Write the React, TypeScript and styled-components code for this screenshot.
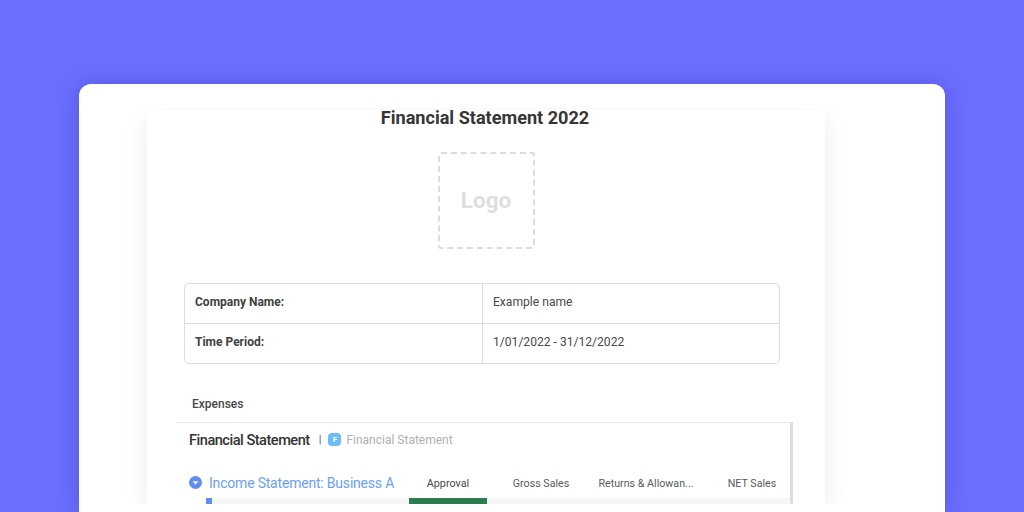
import styled, { createGlobalStyle } from 'styled-components';

const GlobalStyle = createGlobalStyle`
  html, body {
    margin: 0;
    padding: 0;
    width: 1024px;
    height: 512px;
    overflow: hidden;
  }
  body {
    font-family: Roboto, "Liberation Sans", sans-serif;
    background: #6b6eff;
  }
`;

const columns = [
  { label: 'Gross Sales', width: 108 },
  { label: 'Returns & Allowan...', width: 102 },
  { label: 'NET Sales', width: 110 },
];

const infoRows = [
  { label: 'Company Name:', value: 'Example name' },
  { label: 'Time Period:', value: '1/01/2022 - 31/12/2022' },
];

const App = () => (
  <Page>
    <GlobalStyle />
    <Card>
      <SheetClip>
        <Sheet>
          <Title>Financial Statement 2022</Title>
          <LogoBox>Logo</LogoBox>
          <InfoTable>
            {infoRows.map((row) => (
              <InfoRow key={row.label}>
                <InfoLabel>{row.label}</InfoLabel>
                <InfoValue>{row.value}</InfoValue>
              </InfoRow>
            ))}
          </InfoTable>
          <SectionLabel>Expenses</SectionLabel>
          <Board>
            <BoardHeader>
              <BoardTitle>Financial Statement</BoardTitle>
              <Divider>|</Divider>
              <FormBadge>F</FormBadge>
              <BoardSubtitle>Financial Statement</BoardSubtitle>
            </BoardHeader>
            <GroupRow>
              <GroupName>
                <svg width="13" height="13" viewBox="0 0 13 13" aria-hidden="true">
                  <circle cx="6.5" cy="6.5" r="6.5" fill="#5f8eee" />
                  <path d="M3.6 5.2h5.8L6.5 8.4z" fill="#fff" />
                </svg>
                <GroupTitle>Income Statement: Business A</GroupTitle>
              </GroupName>
              <ApprovalHead>Approval</ApprovalHead>
              {columns.map((col) => (
                <ColumnHead key={col.label} $width={col.width}>{col.label}</ColumnHead>
              ))}
            </GroupRow>
            <ProgressRow>
              <BlueMark />
              <GreenBar />
            </ProgressRow>
          </Board>
        </Sheet>
      </SheetClip>
    </Card>
  </Page>
);

const Page = styled.div`
  width: 1024px;
  height: 512px;
  padding-top: 84px;
  box-sizing: border-box;
  overflow: hidden;
`;

const Card = styled.div`
  width: 866px;
  height: 428px;
  margin-left: 79px;
  padding-top: 24px;
  box-sizing: border-box;
  background: #fff;
  border-radius: 12px 12px 0 0;
  box-shadow: 0 0 22px rgba(50, 50, 170, 0.38);
`;

const SheetClip = styled.div`
  width: 738px;
  height: 396px;
  margin-left: 34px;
  padding: 2px 26px 0 34px;
  box-sizing: border-box;
  overflow: hidden;
`;

const Sheet = styled.div`
  width: 678px;
  height: 394px;
  display: flex;
  flex-direction: column;
  align-items: flex-start;
  background: #fff;
  box-shadow: 0 8px 24px rgba(0, 0, 0, 0.08);
  & > * {
    flex-shrink: 0;
  }
`;

const Title = styled.div`
  align-self: center;
  margin: -2px 0 -2px -2px;
  line-height: 20px;
  font-size: 18.1px;
  font-weight: 700;
  color: #363636;
`;

const LogoBox = styled.div`
  align-self: center;
  width: 97px;
  height: 97px;
  margin-top: 26px;
  padding-bottom: 2px;
  display: flex;
  align-items: center;
  justify-content: center;
  box-sizing: border-box;
  border: 2px dashed #dcdcdc;
  border-radius: 3px;
  font-size: 22.5px;
  font-weight: 700;
  color: #dedede;
`;

const InfoTable = styled.div`
  width: 596px;
  margin: 34px 0 0 37px;
  box-sizing: border-box;
  border: 1px solid #dcdcdc;
  border-radius: 5px;
`;

const InfoRow = styled.div`
  display: flex;
  height: 39px;
  & + & {
    border-top: 1px solid #dcdcdc;
  }
`;

const InfoLabel = styled.div`
  width: 298px;
  padding-left: 10px;
  box-sizing: border-box;
  border-right: 1px solid #dcdcdc;
  line-height: 36px;
  font-size: 12px;
  font-weight: 700;
  color: #3f3f3f;
`;

const InfoValue = styled.div`
  padding-left: 10px;
  line-height: 36px;
  font-size: 12.1px;
  color: #484848;
`;

const SectionLabel = styled.div`
  margin: 33px 0 0 45px;
  height: 14px;
  line-height: 14px;
  font-size: 12px;
  font-weight: 500;
  color: #484848;
`;

const Board = styled.div`
  width: 615px;
  height: 82px;
  margin: 11px 0 0 31px;
  box-sizing: border-box;
  padding-left: 11px;
  border-top: 1px solid #e8e8e8;
  border-right: 3px solid #dedede;
  overflow: hidden;
`;

const BoardHeader = styled.div`
  display: flex;
  align-items: center;
  height: 33px;
`;

const BoardTitle = styled.span`
  font-size: 14.6px;
  font-weight: 500;
  letter-spacing: -0.5px;
  color: #333;
`;

const Divider = styled.span`
  margin-left: 9px;
  font-size: 11px;
  color: #555;
`;

const FormBadge = styled.span`
  width: 13px;
  height: 13px;
  margin-left: 7px;
  display: flex;
  align-items: center;
  justify-content: center;
  border-radius: 4px;
  background: #6cbcf5;
  font-size: 8px;
  font-weight: 700;
  color: #fff;
`;

const BoardSubtitle = styled.span`
  margin-left: 5px;
  font-size: 12px;
  color: #aeb0b4;
`;

const GroupRow = styled.div`
  display: flex;
  align-items: center;
  height: 21px;
  margin-top: 17px;
`;

const GroupName = styled.div`
  width: 220px;
  padding-bottom: 2px;
  box-sizing: border-box;
  flex-shrink: 0;
  display: flex;
  align-items: center;
  gap: 7px;
`;

const GroupTitle = styled.span`
  font-size: 14px;
  letter-spacing: -0.2px;
  white-space: nowrap;
  color: #6c9ef5;
`;

const ApprovalHead = styled.div`
  width: 78px;
  flex-shrink: 0;
  text-align: center;
  font-size: 10.8px;
  color: #484848;
`;

const ColumnHead = styled.div<{ $width: number }>`
  width: ${({ $width }) => $width}px;
  flex-shrink: 0;
  text-align: center;
  white-space: nowrap;
  font-size: 10.7px;
  color: #5a5a5a;
`;

const ProgressRow = styled.div`
  display: flex;
  height: 6px;
  margin: 4px 0 0 17px;
  background: #f5f6f6;
`;

const BlueMark = styled.div`
  width: 6px;
  background: #5f8eee;
`;

const GreenBar = styled.div`
  width: 78px;
  margin-left: 197px;
  background: #2b7d4f;
`;

export default App;
